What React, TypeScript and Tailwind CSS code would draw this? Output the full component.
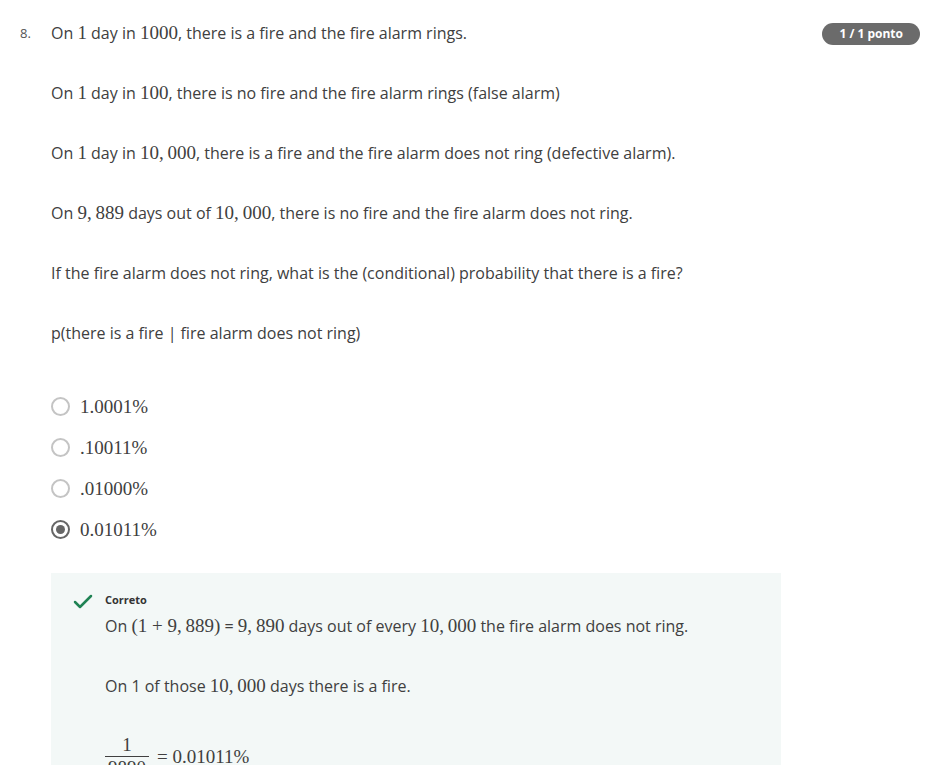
import { Check } from "lucide-react";

const sans = "font-['Open_Sans','Liberation_Sans',sans-serif]";

function M({ children }: { children: React.ReactNode }) {
  return (
    <span className="font-['Liberation_Serif',serif] text-[19px] leading-none">{children}</span>
  );
}

function Radio({ checked }: { checked?: boolean }) {
  return (
    <span
      className={
        "flex items-center justify-center w-[19px] h-[19px] rounded-full border-2 " +
        (checked ? "border-[#666666]" : "border-[#c4c4c4]")
      }
    >
      {checked && <span className="w-[9px] h-[9px] rounded-full bg-[#666666]" />}
    </span>
  );
}

const options = [
  { label: "1.0001%", checked: false },
  { label: ".10011%", checked: false },
  { label: ".01000%", checked: false },
  { label: "0.01011%", checked: true },
];

export default function App() {
  return (
    <div className={`w-[943px] h-[765px] overflow-hidden bg-white text-[#404040] ${sans}`}>
      <div className="flex pt-[21px] pl-[20px] pr-[23px]">
        <div className="w-[31px] text-[13px] leading-[24px] text-[#555]">8.</div>
        <div className="flex-1">
          <div className="flex justify-between items-start">
            <p className="text-[16px] leading-[24px]">
              On <M>1</M> day in <M>1000</M>, there is a fire and the fire alarm rings.
            </p>
            <span className="mt-[2px] h-[22px] px-[17px] rounded-full bg-[#6b6b6b] text-white text-[12px] font-bold leading-[22px]">
              1 / 1 ponto
            </span>
          </div>
          <div className="flex flex-col gap-[36px] mt-[36px] text-[16px] leading-[24px]">
            <p>
              On <M>1</M> day in <M>100</M>, there is no fire and the fire alarm rings (false alarm)
            </p>
            <p>
              On <M>1</M> day in <M>10,&thinsp;000</M>, there is a fire and the fire alarm does not ring
              (defective alarm).
            </p>
            <p>
              On <M>9,&thinsp;889</M> days out of <M>10,&thinsp;000</M>, there is no fire and the fire alarm
              does not ring.
            </p>
            <p>If the fire alarm does not ring, what is the (conditional) probability that there is a fire?</p>
            <p>p(there is a fire | fire alarm does not ring)</p>
          </div>

          <div className="flex flex-col gap-[17px] mt-[49px]">
            {options.map((o) => (
              <div key={o.label} className="flex items-center gap-[10px] h-[24px]">
                <Radio checked={o.checked} />
                <M>{o.label}</M>
              </div>
            ))}
          </div>

          <div className="mt-[32px] w-[730px] bg-[#f3f8f7] pt-[18px] pl-[20px] pb-[20px]">
            <div className="flex gap-[10px]">
              <Check className="w-[24px] h-[24px] text-[#1f8354] mt-[-1px]" strokeWidth={2.5} />
              <div>
                <div className="text-[11px] font-bold leading-[18px] text-[#333]">Correto</div>
                <div className="flex flex-col gap-[36px] mt-[5px] text-[16px] leading-[24px]">
                  <p>
                    On <M>(1 + 9,&thinsp;889)</M> = <M>9,&thinsp;890</M> days out of every{" "}
                    <M>10,&thinsp;000</M> the fire alarm does not ring.
                  </p>
                  <p>
                    On 1 of those <M>10,&thinsp;000</M> days there is a fire.
                  </p>
                  <div className="flex items-center gap-[8px] font-['Liberation_Serif',serif] text-[19px]">
                    <div className="flex flex-col items-center">
                      <span className="leading-[22px] px-[2px]">1</span>
                      <span className="w-[44px] h-px bg-[#404040]" />
                      <span className="leading-[22px]">9890</span>
                    </div>
                    <span>= 0.01011%</span>
                  </div>
                </div>
              </div>
            </div>
          </div>
        </div>
      </div>
    </div>
  );
}
